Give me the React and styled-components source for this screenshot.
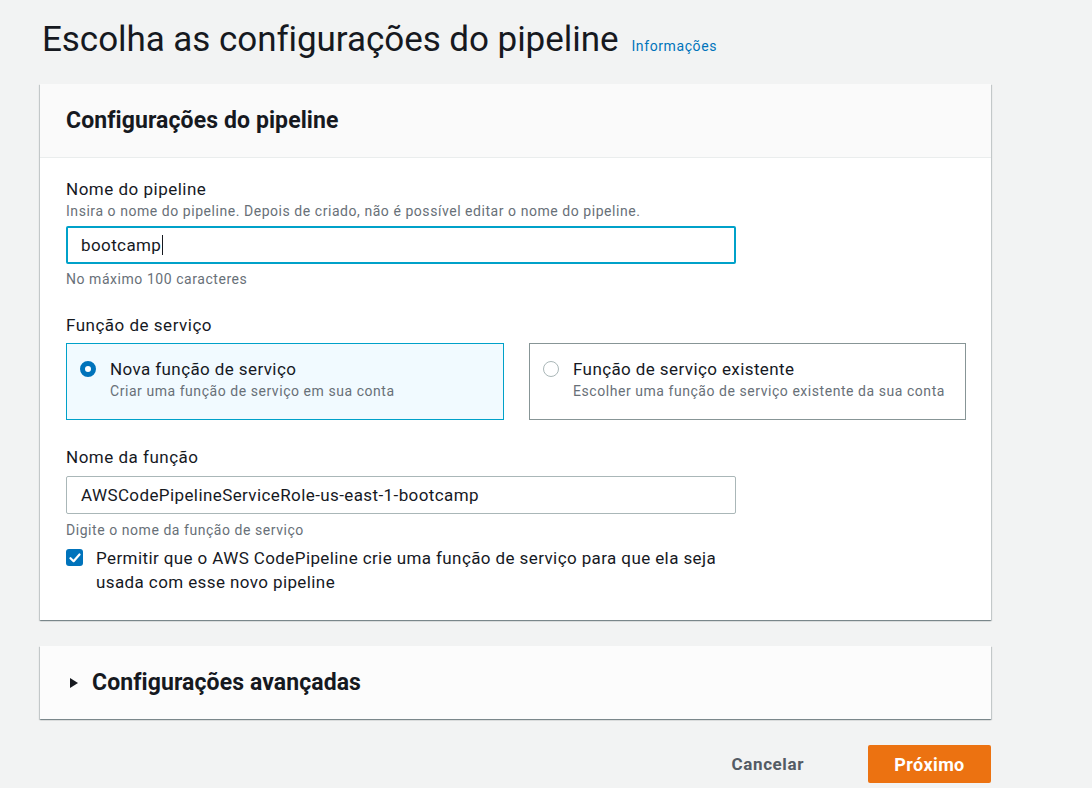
import React from 'react'
import styled, { createGlobalStyle } from 'styled-components'

const GlobalStyle = createGlobalStyle`
  html, body {
    margin: 0;
    padding: 0;
    background: #f2f3f3;
  }
  body {
    font-family: Roboto, 'Liberation Sans', Arial, sans-serif;
    color: #16191f;
  }
`

const Page = styled.div`
  width: 951px;
  padding: 20px 0 0 40px;
`

const TitleRow = styled.div`
  display: flex;
  align-items: baseline;
  gap: 13px;
  margin: 0 0 24px 2px;
`

const Title = styled.h1`
  margin: 0;
  font-size: 35px;
  font-weight: 400;
  line-height: 40px;
  letter-spacing: -0.05px;
  color: #16191f;
`

const InfoLink = styled.a`
  font-size: 14px;
  letter-spacing: 0.6px;
  color: #0073bb;
  text-decoration: none;
`

const Card = styled.section`
  background: #fff;
  box-shadow: 0 1px 1px 0 rgba(0, 28, 36, 0.3), 1px 1px 1px 0 rgba(0, 28, 36, 0.15),
    -1px 1px 1px 0 rgba(0, 28, 36, 0.15);
  margin-bottom: 26px;
`

const CardHeader = styled.header`
  height: 73px;
  display: flex;
  align-items: center;
  padding: 0 26px;
  background: #fafafa;
  border-bottom: 1px solid #eaeded;
`

const CardTitle = styled.h2`
  margin: 0;
  font-size: 23px;
  font-weight: 700;
  letter-spacing: 0.1px;
  line-height: 26px;
`

const CardBody = styled.div`
  padding: 20px 26px 26px;
`

const Label = styled.div`
  font-size: 17px;
  line-height: 22px;
  letter-spacing: 0.5px;
  margin-top: ${p => p.$top || 0}px;
`

const Description = styled.div`
  font-size: 14px;
  line-height: 18px;
  letter-spacing: 0.55px;
  color: #687078;
  margin-top: ${p => p.$top || 0}px;
`

const Input = styled.div`
  box-sizing: border-box;
  width: 670px;
  height: 38px;
  margin-top: ${p => p.$top || 8}px;
  display: flex;
  align-items: center;
  padding: 0 ${p => (p.$focused ? 13 : 14)}px;
  border: ${p => (p.$focused ? '2px solid #00a1c9' : '1px solid #aab7b8')};
  border-radius: 2px;
  background: #fff;
  font-size: 17px;
  letter-spacing: 0.4px;
`

const Caret = styled.span`
  display: inline-block;
  width: 1px;
  height: 20px;
  background: #16191f;
  margin-left: 1px;
`

const TileGrid = styled.div`
  display: grid;
  grid-template-columns: 438px 437px;
  gap: 25px;
  margin-top: 7px;
`

const Tile = styled.div`
  box-sizing: border-box;
  height: 77px;
  display: flex;
  gap: 14px;
  padding: 14px 13px 0;
  border: 1px solid ${p => (p.$selected ? '#00a1c9' : '#879596')};
  background: ${p => (p.$selected ? '#f1faff' : '#fff')};
`

const Radio = styled.span`
  box-sizing: border-box;
  flex: 0 0 16px;
  width: 16px;
  height: 16px;
  margin-top: 3px;
  border-radius: 50%;
  border: ${p => (p.$checked ? '5px solid #0073bb' : '1px solid #aab7b8')};
  background: #fff;
`

const TileTitle = styled.div`
  font-size: 17px;
  line-height: 22px;
  letter-spacing: 0.4px;
`

const TileDesc = styled.div`
  margin-top: 1px;
  font-size: 14px;
  line-height: 21px;
  letter-spacing: 0.55px;
  color: #687078;
`

const CheckRow = styled.label`
  display: flex;
  gap: 13px;
  margin-top: 7px;
`

const CheckBox = styled.span`
  flex: 0 0 17px;
  height: 17px;
  margin-top: 3px;
  border-radius: 3px;
  background: #0073bb;
  display: flex;
  align-items: center;
  justify-content: center;
`

const CheckText = styled.span`
  width: 630px;
  font-size: 17px;
  line-height: 24px;
  letter-spacing: 0.4px;
`

const Expander = styled.div`
  height: 73px;
  display: flex;
  align-items: center;
  gap: 14px;
  padding: 0 30px;
  background: #fcfcfc;
`

const Triangle = styled.span`
  width: 0;
  height: 0;
  border-top: 5px solid transparent;
  border-bottom: 5px solid transparent;
  border-left: 8px solid #16191f;
`

const Actions = styled.div`
  display: flex;
  justify-content: flex-end;
  align-items: center;
  gap: 64px;
`

const LinkButton = styled.button`
  border: none;
  background: none;
  padding: 0;
  font-family: inherit;
  font-size: 17px;
  font-weight: 700;
  letter-spacing: 0.6px;
  color: #545b64;
`

const PrimaryButton = styled.button`
  width: 123px;
  height: 38px;
  border: none;
  border-radius: 2px;
  background: #ec7211;
  color: #fff;
  font-family: inherit;
  font-size: 18px;
  font-weight: 700;
  letter-spacing: 0.4px;
`

const tiles = [
  { title: 'Nova função de serviço', desc: 'Criar uma função de serviço em sua conta', selected: true },
  { title: 'Função de serviço existente', desc: 'Escolher uma função de serviço existente da sua conta', selected: false },
]

export default function App() {
  return (
    <>
      <GlobalStyle />
      <Page>
        <TitleRow>
          <Title>Escolha as configurações do pipeline</Title>
          <InfoLink href="#">Informações</InfoLink>
        </TitleRow>

        <Card>
          <CardHeader>
            <CardTitle>Configurações do pipeline</CardTitle>
          </CardHeader>
          <CardBody>
            <Label>Nome do pipeline</Label>
            <Description $top={2}>
              Insira o nome do pipeline. Depois de criado, não é possível editar o nome do pipeline.
            </Description>
            <Input $focused $top={6}>
              bootcamp<Caret />
            </Input>
            <Description $top={6}>No máximo 100 caracteres</Description>

            <Label $top={26}>Função de serviço</Label>
            <TileGrid>
              {tiles.map(t => (
                <Tile key={t.title} $selected={t.selected}>
                  <Radio $checked={t.selected} />
                  <div>
                    <TileTitle>{t.title}</TileTitle>
                    <TileDesc>{t.desc}</TileDesc>
                  </div>
                </Tile>
              ))}
            </TileGrid>

            <Label $top={26}>Nome da função</Label>
            <Input $top={8}>AWSCodePipelineServiceRole-us-east-1-bootcamp</Input>
            <Description $top={7}>Digite o nome da função de serviço</Description>
            <CheckRow>
              <CheckBox>
                <svg width="12" height="10" viewBox="0 0 12 10">
                  <path d="M1.5 5.2 L4.6 8.2 L10.5 1.5" fill="none" stroke="#fff" strokeWidth="2.2" strokeLinecap="round" strokeLinejoin="round" />
                </svg>
              </CheckBox>
              <CheckText>
                Permitir que o AWS CodePipeline crie uma função de serviço para que ela seja usada com esse novo pipeline
              </CheckText>
            </CheckRow>
          </CardBody>
        </Card>

        <Card>
          <Expander>
            <Triangle />
            <CardTitle>Configurações avançadas</CardTitle>
          </Expander>
        </Card>

        <Actions>
          <LinkButton>Cancelar</LinkButton>
          <PrimaryButton>Próximo</PrimaryButton>
        </Actions>
      </Page>
    </>
  )
}
